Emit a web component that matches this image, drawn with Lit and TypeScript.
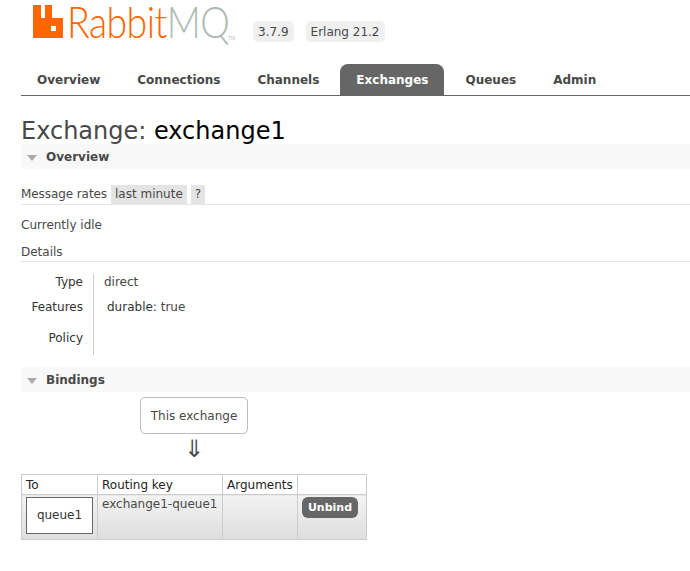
import { LitElement, html, css } from "lit";
import { customElement } from "lit/decorators.js";

@customElement("app-root")
export class AppRoot extends LitElement {
  static styles = css`
    :host { display: block; width: 690px; height: 571px; overflow: hidden; background: #fff; color: #484848; font: 12px/16px "DejaVu Sans", Verdana, sans-serif; }
    * { box-sizing: border-box; }
    .page { padding-left: 21px; }
    .header { height: 64px; display: flex; align-items: flex-start; padding-left: 12px; }
    .logo { display: flex; align-items: flex-start; width: 220px; height: 44px; padding-top: 5px; }
    .mark { width: 30px; height: 33px; flex: none; margin-right: 4px; }
    .word { font: 300 43px/52px Lato, "Liberation Sans", sans-serif; letter-spacing: -0.6px; color: #f60; white-space: nowrap; width: 184px; height: 52px; margin: -9px -24px 0 0; flex: none; transform: scaleX(0.87); transform-origin: left center; }
    .word span { color: #abbbb4; }
    .tm { font: 5px/6px "Liberation Sans", sans-serif; color: #bbb; margin: 30px 0 0 1px; }
    .pill { background: #f0f0f0; border-radius: 5px; height: 21px; line-height: 22px; padding: 0 5px; margin-top: 21px; margin-right: 12px; white-space: nowrap; }
    .nav { display: flex; gap: 5px; height: 32px; border-bottom: 1px solid #666; }
    .tab { height: 31px; line-height: 32px; padding: 0 16px; font-weight: bold; white-space: nowrap; border-radius: 8px 8px 0 0; color: #484848; }
    .tab.on { background: #666; color: #fff; }
    h1 { margin: 0; font-weight: normal; font-size: 24px; line-height: 28px; padding-top: 21px; height: 48px; color: #484848; white-space: nowrap; }
    h1 b { font-weight: normal; color: #000; }
    .bar { height: 25px; background: #f8f8f8; display: flex; align-items: center; gap: 9px; padding-left: 6px; font-weight: bold; }
    .tri { width: 0; height: 0; border-left: 5.5px solid transparent; border-right: 5.5px solid transparent; border-top: 6px solid #aaa; margin-top: 2px; }
    .rates { height: 20px; margin-top: 16px; border-bottom: 1px solid #e4e4e4; display: flex; gap: 4px; align-items: stretch; line-height: 19px; }
    .lead { letter-spacing: -0.08px; }
    .chip { background: #e4e4e4; padding: 0 4px; height: 19px; }
    .idle { margin-top: 12px; height: 16px; }
    .details { margin-top: 11px; height: 18px; border-bottom: 1px solid #e4e4e4; line-height: 16px; }
    .facts { display: grid; grid-template-columns: 73px 1fr; margin-top: 12px; height: 81px; }
    .keys { border-right: 1px solid #ccc; padding-right: 10px; text-align: right; width: 73px; }
    .keys div { color: #333; }
    .vals { padding-left: 10px; }
    .vals .feat { padding-left: 3px; margin-top: 9px; }
    .k2 { margin-top: 9px; }
    .k3 { margin-top: 15px; }
    .feat b { font-weight: normal; color: #333; }
    .bindings { margin-top: 12px; }
    .source { margin: 5px 0 0 119px; width: 108px; height: 37px; border: 1px solid #bbb; border-radius: 5px; text-align: center; line-height: 37px; }
    .arrow { margin-left: 119px; width: 108px; text-align: center; height: 40px; font-size: 24px; line-height: 30px; color: #484848; }
    table { border-collapse: collapse; table-layout: fixed; width: 345px; }
    th { border: 1px solid #ccc; background: #fff; color: #222; font-weight: normal; text-align: left; padding: 1px 4px 0; height: 20px; line-height: 18px; white-space: nowrap; }
    td { border: 1px solid #ccc; vertical-align: top; padding: 2px 4px 0; height: 45px; background: linear-gradient(#f3f3f3, #dedede); white-space: nowrap; }
    .w1 { width: 76px; } .w2 { width: 125px; } .w3 { width: 75px; } .w4 { width: 69px; }
    .q { width: 67px; height: 37px; background: #fff; border: 1px solid #666; color: #333; text-align: center; line-height: 35px; }
    .btn { display: inline-block; background: #666; color: #fff; font-weight: bold; font-size: 11px; border-radius: 6px; width: 56px; height: 21px; line-height: 21px; text-align: center; }
    .rk { padding-top: 1px; }
  `;

  render() {
    return html`<div class="page">
      <div class="header">
        <div class="logo">
          <svg class="mark" viewBox="0 0 30 33"><path fill="#f60" fill-rule="evenodd" d="M0 0H8V13H12V0H19V13H30V33H0ZM18 21V26H23V21Z"/></svg>
          <div class="word">Rabbit<span>MQ</span></div>
          <div class="tm">TM</div>
        </div>
        <div class="pill">3.7.9</div>
        <div class="pill">Erlang 21.2</div>
      </div>
      <div class="nav">
        <div class="tab">Overview</div><div class="tab">Connections</div><div class="tab">Channels</div>
        <div class="tab on">Exchanges</div><div class="tab">Queues</div><div class="tab">Admin</div>
      </div>
      <h1>Exchange: <b>exchange1</b></h1>
      <div class="bar"><i class="tri"></i>Overview</div>
      <div class="rates"><span class="lead">Message rates</span><span class="chip">last minute</span><span class="chip">?</span></div>
      <div class="idle">Currently idle</div>
      <div class="details">Details</div>
      <div class="facts">
        <div class="keys"><div>Type</div><div class="k2">Features</div><div class="k3">Policy</div></div>
        <div class="vals"><div>direct</div><div class="feat"><b>durable:</b> true</div></div>
      </div>
      <div class="bar bindings"><i class="tri"></i>Bindings</div>
      <div class="source">This exchange</div>
      <div class="arrow">⇓</div>
      <table>
        <tr><th class="w1">To</th><th class="w2">Routing key</th><th class="w3">Arguments</th><th class="w4"></th></tr>
        <tr><td><div class="q">queue1</div></td><td class="rk">exchange1-queue1</td><td></td><td><span class="btn">Unbind</span></td></tr>
      </table>
    </div>`;
  }
}
